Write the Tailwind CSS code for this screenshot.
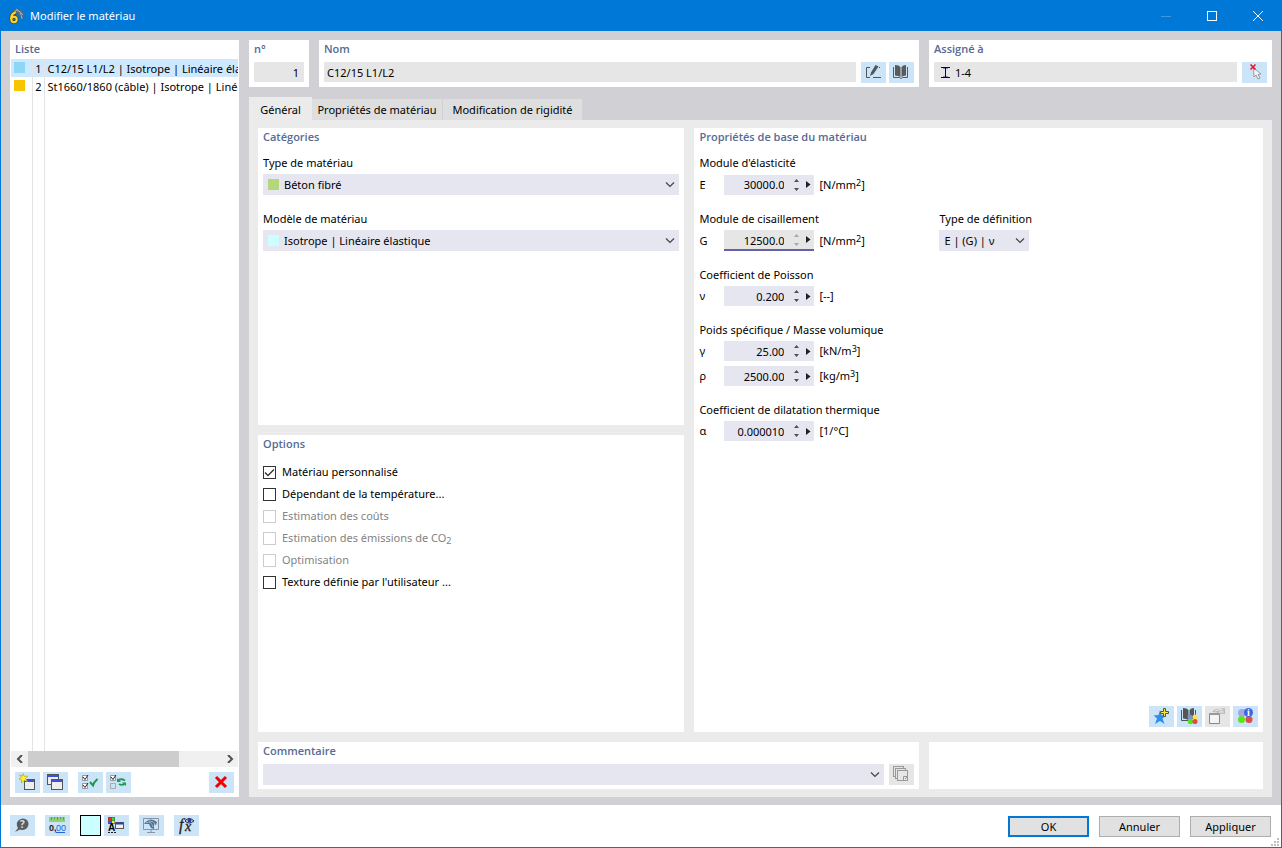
<!DOCTYPE html>
<html lang="fr">
<head>
    <meta charset="UTF-8">
    <meta name="viewport" content="width=device-width, initial-scale=1.0">
    <title>Modifier le matériau</title>
    <script src="https://cdn.jsdelivr.net/npm/@tailwindcss/browser@4"></script>
</head>
<body class="font-['Noto_Sans','Open_Sans',sans-serif] text-[11px] leading-4 text-black">
    <div class="min-h-screen flex flex-col border border-t-0 border-[#0078d7] bg-white">
        <!-- Title bar -->
        <header class="h-[31px] shrink-0 flex items-center bg-[#0078d7] text-white">
            <svg class="w-4 h-4 ml-2" viewBox="0 0 16 16" aria-hidden="true">
                <path d="M3 4Q9-3 15 4L13 13Q12 7 7 6Z" fill="#52677d"/>
                <path d="M5 3Q10 1 14 7M7 1Q12 3 13 11" stroke="#9eb2c4" fill="none"/>
                <path d="M7 4Q2 6 2 11" stroke="#5b4a10" stroke-width="4" fill="none"/>
                <circle cx="5" cy="11.500" r="2.700" stroke="#5b4a10" stroke-width="3.500" fill="none"/>
                <path d="M7 4Q2 6 2 11" stroke="#ffd42e" stroke-width="2" fill="none"/>
                <circle cx="5" cy="11.500" r="2.700" stroke="#ffd42e" stroke-width="2" fill="none"/>
            </svg>
            <h1 class="flex-1 ml-[5px]">Modifier le matériau</h1>
            <button class="w-[46px] h-full flex items-center justify-center" aria-label="Réduire" disabled>
                <svg class="w-[10px] h-[10px]" viewBox="0 0 10 10"><path d="M0 5.500H10" stroke="#3f98e0"/></svg>
            </button>
            <button class="w-[46px] h-full flex items-center justify-center" aria-label="Agrandir">
                <svg class="w-[10px] h-[10px]" viewBox="0 0 10 10"><rect x=".5" y=".5" width="9" height="9" fill="none" stroke="#fff"/></svg>
            </button>
            <button class="w-[46px] h-full flex items-center justify-center" aria-label="Fermer">
                <svg class="w-[10px] h-[10px]" viewBox="0 0 10 10"><path d="M0 0L10 10M10 0L0 10" stroke="#fff"/></svg>
            </button>
        </header>

        <main class="flex-1 flex gap-[10px] px-[9px] pt-[9px] pb-2 bg-[#d1d0d5]">
            <!-- Material list -->
            <section class="w-[229px] shrink-0 flex flex-col bg-white">
                <h2 class="h-[19px] pl-[5px] leading-[18px] font-['Open_Sans'] font-semibold text-[#566a95]">Liste</h2>
                <div class="flex-1 mx-px flex flex-col overflow-hidden">
                    <table class="w-full table-fixed border-collapse">
                        <colgroup><col class="w-[21px]"><col class="w-3"><col></colgroup>
                        <tbody>
                            <tr class="h-[18px] bg-[#cde8ff]">
                                <td class="pl-[3px] border-r border-[#e4e4e4]"><div class="w-[11px] h-[11px] mb-[2px] bg-[#8dd6f5]"></div></td>
                                <td class="pt-[2px] pr-[2px] text-right border-r border-[#e4e4e4]">1</td>
                                <td class="pt-[2px] pl-[3px] overflow-hidden whitespace-nowrap">C12/15 L1/L2 | Isotrope | Linéaire élastique</td>
                            </tr>
                            <tr class="h-[18px]">
                                <td class="pl-[3px] border-r border-[#e4e4e4]"><div class="w-[11px] h-[11px] mb-[2px] bg-[#f7c400]"></div></td>
                                <td class="pt-[2px] pr-[2px] text-right border-r border-[#e4e4e4]">2</td>
                                <td class="pt-[2px] pl-[3px] overflow-hidden whitespace-nowrap">St1660/1860 (câble) | Isotrope | Linéaire élastique</td>
                            </tr>
                        </tbody>
                    </table>
                    <div class="flex-1 flex">
                        <div class="w-[22px] border-r border-[#e4e4e4]"></div>
                        <div class="w-3 border-r border-[#e4e4e4]"></div>
                    </div>
                </div>
                <div class="h-4 mx-px flex bg-[#f0f0f0]">
                    <button class="w-[17px] flex items-center justify-center" aria-label="Défiler à gauche">
                        <svg class="w-2 h-2" viewBox="0 0 8 8"><path d="M6 0L2 4L6 8" fill="none" stroke="#505050" stroke-width="2"/></svg>
                    </button>
                    <div class="flex-1"><div class="w-[78%] h-full bg-[#cdcdcd]"></div></div>
                    <button class="w-[17px] flex items-center justify-center" aria-label="Défiler à droite">
                        <svg class="w-2 h-2" viewBox="0 0 8 8"><path d="M2 0L6 4L2 8" fill="none" stroke="#505050" stroke-width="2"/></svg>
                    </button>
                </div>
                <div class="flex gap-[3px] pt-[5px] px-[5px] pb-1">
                    <button class="w-[25px] h-[21px] bg-[#cce4f7]" aria-label="Nouveau">
                        <svg viewBox="0 0 25 21">
                            <rect x="9.500" y="7.500" width="10" height="10" fill="#eee" stroke="#555"/><path d="M10 9H19" stroke="#3d50e0" stroke-width="2"/>
                            <path d="M8 1.500L9.500 4.500L13 4L10.500 6.500L12.500 9.500L9 8.500L6.500 11L6.500 8L4 7L6.500 5.500L4.500 3L7.500 4Z" fill="#fff22c" stroke="#a89c20" stroke-width=".6"/>
                        </svg>
                    </button>
                    <button class="w-[25px] h-[21px] bg-[#cce4f7]" aria-label="Copier">
                        <svg viewBox="0 0 25 21">
                            <rect x="4.500" y="2.500" width="11" height="10" fill="#eee" stroke="#555"/><path d="M5 4H15" stroke="#3d50e0" stroke-width="2"/>
                            <rect x="8.500" y="7.500" width="11" height="10" fill="#eee" stroke="#555"/><path d="M9 9H19" stroke="#3d50e0" stroke-width="2"/>
                        </svg>
                    </button>
                    <button class="w-[25px] h-[21px] ml-[7px] bg-[#cce4f7]" aria-label="Tout sélectionner">
                        <svg viewBox="0 0 25 21" fill="none">
                            <path d="M4.500 3.500H9.500V8.500H4.500ZM4.500 11.500H9.500V16.500H4.500Z" fill="#fff" stroke="#999"/>
                            <path d="M5 5L7 7.500L10 3M5 13L7 15.500L10 11" stroke="#222"/>
                            <path d="M12 10L15 13.500Q16 10 19.500 7" stroke="#149c4c" stroke-width="2"/>
                        </svg>
                    </button>
                    <button class="w-[25px] h-[21px] bg-[#cce4f7]" aria-label="Inverser la sélection">
                        <svg viewBox="0 0 25 21" fill="none">
                            <path d="M4.500 3.500H9.500V8.500H4.500Z" fill="#fff" stroke="#999"/>
                            <path d="M5 5L7 7.500L10 3" stroke="#222"/>
                            <path d="M4.500 11.500H9.500V16.500H4.500Z" stroke="#aaa"/>
                            <path d="M12 8.500Q15 6 19 8.500M19 11.500Q16 14 13 12" stroke="#18a050" stroke-width="1.800"/>
                            <path d="M11 6V10H15ZM20 14V10.500H16Z" fill="#18a050"/>
                        </svg>
                    </button>
                    <button class="w-[25px] h-[21px] ml-auto bg-[#cce4f7]" aria-label="Supprimer">
                        <svg viewBox="0 0 25 21"><path d="M7 5L17 15M17 5L7 15" stroke="#f40000" stroke-width="3"/></svg>
                    </button>
                </div>
            </section>

            <div class="flex-1 min-w-0 flex flex-col">
                <!-- Number, name and assignment -->
                <div class="flex gap-[10px] mb-[10px]">
                    <section class="w-[60px] h-[47px] px-[5px] bg-white">
                        <label for="no" class="block h-[22px] leading-[18px] font-['Open_Sans'] font-semibold text-[#566a95]">n°</label>
                        <input id="no" class="block w-full h-5 pt-px pr-[5px] text-right bg-[#e6e6e6]" value="1" readonly>
                    </section>
                    <section class="flex-1 h-[47px] px-[5px] bg-white">
                        <label for="nom" class="block h-[22px] leading-[18px] font-['Open_Sans'] font-semibold text-[#566a95]">Nom</label>
                        <div class="flex">
                            <input id="nom" class="flex-1 min-w-0 h-5 pt-px pl-[3px] mr-[5px] bg-[#e6e6e6]" value="C12/15 L1/L2" readonly>
                            <button class="w-[25px] h-[21px] mr-[3px] bg-[#cce4f7]" aria-label="Modifier le nom">
                                <svg viewBox="0 0 25 21" fill="none">
                                    <path d="M9 5.500H5.500V15.500H9M12 15.500H20M15 5.500H16M18 5.500H19" stroke="#555"/>
                                    <path d="M9 14L10 10.500L14.500 3L17.500 4.500L12.500 12Z" fill="#555"/>
                                </svg>
                            </button>
                            <button class="w-[25px] h-[21px] bg-[#cce4f7]" aria-label="Bibliothèque">
                                <svg viewBox="0 0 25 21">
                                    <path d="M6 3Q10 3 11.500 5V15Q9 13.500 6 13.500ZM17 3Q14 3 12.500 5V15Q14 13.500 17 13.500Z" fill="#5a5a5a"/>
                                    <path d="M4.500 5V15.500H10.500L12 16.500L13.500 15.500H18.500V5" fill="none" stroke="#5a5a5a"/>
                                </svg>
                            </button>
                        </div>
                    </section>
                    <section class="w-[343px] h-[47px] px-[5px] bg-white">
                        <label for="assigne" class="block h-[22px] leading-[18px] font-['Open_Sans'] font-semibold text-[#566a95]">Assigné à</label>
                        <div class="flex">
                            <div class="flex-1 flex items-center h-5 pl-[7px] mr-[5px] bg-[#e6e6e6]">
                                <svg class="w-[9px] h-[11px]" viewBox="0 0 9 11"><path d="M0 .5H9M0 10.500H9M4.500 0V11" stroke="#00007f"/><path d="M2 1.500H7M2 9.500H7" stroke="#00007f" stroke-opacity=".4"/></svg>
                                <input id="assigne" class="flex-1 min-w-0 h-5 pt-px pl-[5px]" value="1-4" readonly>
                            </div>
                            <button class="w-[25px] h-[21px] bg-[#cce4f7]" aria-label="Sélectionner">
                                <svg viewBox="0 0 25 21">
                                    <path d="M11.500 6L12 15L14 13L16 17L18 16L16 12.500L19 12Z" fill="#f4f4f4" stroke="#888" stroke-width=".8"/>
                                    <path d="M8.500 2.500L13.500 7.500M13.500 2.500L8.500 7.500" stroke="#e81224" stroke-width="1.500"/>
                                </svg>
                            </button>
                        </div>
                    </section>
                </div>

                <!-- Tabs -->
                <nav class="flex items-end" role="tablist">
                    <button role="tab" aria-selected="true" class="w-[63px] h-[23px] pt-[3px] bg-[#ebebeb]">Général</button>
                    <button role="tab" class="w-[130px] h-[21px] pt-px mr-px bg-[#dedede]">Propriétés de matériau</button>
                    <button role="tab" class="w-[139px] h-[21px] pt-px bg-[#dedede]">Modification de rigidité</button>
                </nav>

                <div class="flex-1 flex flex-col gap-[10px] px-[9px] py-2 bg-[#ebebeb]">
                    <div class="flex-1 grid grid-cols-[3fr_4fr] gap-[10px]">
                        <div class="flex flex-col gap-[10px]">
                            <section class="flex-1 px-[5px] bg-white">
                                <h2 class="h-[27px] leading-[18px] font-['Open_Sans'] font-semibold text-[#566a95]">Catégories</h2>
                                <div class="flex flex-col gap-4">
                                    <div>
                                        <label for="type" class="block h-[19px]">Type de matériau</label>
                                        <div class="relative h-[21px] bg-[#e6e6f1]">
                                            <select id="type" class="appearance-none w-full h-full pl-[21px]"><option>Béton fibré</option></select>
                                            <span class="absolute left-[5px] top-[5px] w-[11px] h-[11px] bg-[#b4d77b]"></span>
                                            <svg class="absolute right-1 top-2 w-[10px] h-[6px] pointer-events-none" viewBox="0 0 10 6"><path d="M1 .5L5 4.500L9 .5" fill="none" stroke="#444" stroke-width="1.200"/></svg>
                                        </div>
                                    </div>
                                    <div>
                                        <label for="modele" class="block h-[19px]">Modèle de matériau</label>
                                        <div class="relative h-[21px] bg-[#e6e6f1]">
                                            <select id="modele" class="appearance-none w-full h-full pl-[21px]"><option>Isotrope | Linéaire élastique</option></select>
                                            <span class="absolute left-[5px] top-[5px] w-[11px] h-[11px] bg-[#ccffff]"></span>
                                            <svg class="absolute right-1 top-2 w-[10px] h-[6px] pointer-events-none" viewBox="0 0 10 6"><path d="M1 .5L5 4.500L9 .5" fill="none" stroke="#444" stroke-width="1.200"/></svg>
                                        </div>
                                    </div>
                                </div>
                            </section>
                            <section class="flex-1 px-[5px] bg-white">
                                <h2 class="h-[26px] leading-[18px] font-['Open_Sans'] font-semibold text-[#566a95]">Options</h2>
                                <label class="flex items-center h-[22px] gap-[6px]">
                                    <span class="relative w-[13px] h-[13px]">
                                        <input type="checkbox" checked class="appearance-none block w-[13px] h-[13px] border border-[#333]">
                                        <svg class="absolute inset-0 w-[13px] h-[13px]" viewBox="0 0 13 13"><path d="M2 6.500L5 9.500L11 3.500" fill="none" stroke="#333" stroke-width="1.300"/></svg>
                                    </span>
                                    Matériau personnalisé
                                </label>
                                <label class="flex items-center h-[22px] gap-[6px]"><input type="checkbox" class="appearance-none w-[13px] h-[13px] border border-[#333]">Dépendant de la température...</label>
                                <label class="flex items-center h-[22px] gap-[6px] text-[#838383]"><input type="checkbox" disabled class="appearance-none w-[13px] h-[13px] border border-[#ccc]">Estimation des coûts</label>
                                <label class="flex items-center h-[22px] gap-[6px] text-[#838383]"><input type="checkbox" disabled class="appearance-none w-[13px] h-[13px] border border-[#ccc]"><span>Estimation des émissions de CO<sub class="text-[9px] bottom-[-2px]">2</sub></span></label>
                                <label class="flex items-center h-[22px] gap-[6px] text-[#838383]"><input type="checkbox" disabled class="appearance-none w-[13px] h-[13px] border border-[#ccc]">Optimisation</label>
                                <label class="flex items-center h-[22px] gap-[6px]"><input type="checkbox" class="appearance-none w-[13px] h-[13px] border border-[#333]">Texture définie par l'utilisateur ...</label>
                            </section>
                        </div>

                        <!-- Basic properties -->
                        <section class="flex flex-col px-[5px] bg-white">
                            <h2 class="h-[27px] leading-[18px] font-['Open_Sans'] font-semibold text-[#566a95]">Propriétés de base du matériau</h2>
                            <div class="flex-1 flex flex-col gap-4">
                                <div>
                                    <p class="h-[19px]">Module d'élasticité</p>
                                    <div class="flex items-center h-[21px]">
                                        <label for="e" class="w-[25px]">E</label>
                                        <div class="flex w-[90px] h-5 mr-[5px] bg-[#e6e6f1]">
                                            <input id="e" class="w-[60px] pt-px text-right" value="30000.0">
                                            <button class="w-[22px] flex justify-end items-center" aria-label="Ajuster E"><svg class="w-4 h-3" viewBox="0 0 16 12"><path d="M4 3L6.500 0L9 3ZM4 9L6.500 12L9 9Z" fill="#505050"/></svg></button>
                                            <button class="w-2 flex items-center" aria-label="Valeurs E"><svg class="w-[5px] h-[7px]" viewBox="0 0 5 7"><path d="M0 0L4.500 3.500L0 7Z" fill="#222"/></svg></button>
                                        </div>
                                        <span>[N/mm<sup class="text-[9px] top-[-3px]">2</sup>]</span>
                                    </div>
                                </div>
                                <div class="flex">
                                    <div class="w-60">
                                        <p class="h-[19px]">Module de cisaillement</p>
                                        <div class="flex items-center h-[21px]">
                                            <label for="g" class="w-[25px]">G</label>
                                            <div class="flex w-[90px] h-[21px] mr-[5px] bg-[#e6e6e6] border-b-2 border-[#6461a8]">
                                                <input id="g" class="w-[60px] pt-[2px] text-right" value="12500.0" readonly>
                                                <button class="w-[22px] flex justify-end items-center" aria-label="Ajuster G" disabled><svg class="w-4 h-3" viewBox="0 0 16 12"><path d="M4 3L6.500 0L9 3ZM4 9L6.500 12L9 9Z" fill="#a8a8a8"/></svg></button>
                                                <button class="w-2 flex items-center" aria-label="Valeurs G"><svg class="w-[5px] h-[7px]" viewBox="0 0 5 7"><path d="M0 0L4.500 3.500L0 7Z" fill="#222"/></svg></button>
                                            </div>
                                            <span>[N/mm<sup class="text-[9px] top-[-3px]">2</sup>]</span>
                                        </div>
                                    </div>
                                    <div>
                                        <label for="def" class="block h-[19px]">Type de définition</label>
                                        <div class="relative w-[90px] h-[21px] bg-[#e6e6f1]">
                                            <select id="def" class="appearance-none w-full h-full pl-[5px]"><option>E | (G) | ν</option></select>
                                            <svg class="absolute right-1 top-2 w-[10px] h-[6px] pointer-events-none" viewBox="0 0 10 6"><path d="M1 .5L5 4.500L9 .5" fill="none" stroke="#444" stroke-width="1.200"/></svg>
                                        </div>
                                    </div>
                                </div>
                                <div>
                                    <p class="h-[19px]">Coefficient de Poisson</p>
                                    <div class="flex items-center h-5">
                                        <label for="nu" class="w-[25px]">ν</label>
                                        <div class="flex w-[90px] h-5 mr-[5px] bg-[#e6e6f1]">
                                            <input id="nu" class="w-[60px] pt-px text-right" value="0.200">
                                            <button class="w-[22px] flex justify-end items-center" aria-label="Ajuster ν"><svg class="w-4 h-3" viewBox="0 0 16 12"><path d="M4 3L6.500 0L9 3ZM4 9L6.500 12L9 9Z" fill="#505050"/></svg></button>
                                            <button class="w-2 flex items-center" aria-label="Valeurs ν"><svg class="w-[5px] h-[7px]" viewBox="0 0 5 7"><path d="M0 0L4.500 3.500L0 7Z" fill="#222"/></svg></button>
                                        </div>
                                        <span>[--]</span>
                                    </div>
                                </div>
                                <div>
                                    <p class="h-[19px]">Poids spécifique / Masse volumique</p>
                                    <div class="flex items-center h-5 mb-[5px]">
                                        <label for="gamma" class="w-[25px]">γ</label>
                                        <div class="flex w-[90px] h-5 mr-[5px] bg-[#e6e6f1]">
                                            <input id="gamma" class="w-[60px] pt-px text-right" value="25.00">
                                            <button class="w-[22px] flex justify-end items-center" aria-label="Ajuster γ"><svg class="w-4 h-3" viewBox="0 0 16 12"><path d="M4 3L6.500 0L9 3ZM4 9L6.500 12L9 9Z" fill="#505050"/></svg></button>
                                            <button class="w-2 flex items-center" aria-label="Valeurs γ"><svg class="w-[5px] h-[7px]" viewBox="0 0 5 7"><path d="M0 0L4.500 3.500L0 7Z" fill="#222"/></svg></button>
                                        </div>
                                        <span>[kN/m<sup class="text-[9px] top-[-3px]">3</sup>]</span>
                                    </div>
                                    <div class="flex items-center h-5">
                                        <label for="rho" class="w-[25px]">ρ</label>
                                        <div class="flex w-[90px] h-5 mr-[5px] bg-[#e6e6f1]">
                                            <input id="rho" class="w-[60px] pt-px text-right" value="2500.00">
                                            <button class="w-[22px] flex justify-end items-center" aria-label="Ajuster ρ"><svg class="w-4 h-3" viewBox="0 0 16 12"><path d="M4 3L6.500 0L9 3ZM4 9L6.500 12L9 9Z" fill="#505050"/></svg></button>
                                            <button class="w-2 flex items-center" aria-label="Valeurs ρ"><svg class="w-[5px] h-[7px]" viewBox="0 0 5 7"><path d="M0 0L4.500 3.500L0 7Z" fill="#222"/></svg></button>
                                        </div>
                                        <span>[kg/m<sup class="text-[9px] top-[-3px]">3</sup>]</span>
                                    </div>
                                </div>
                                <div>
                                    <p class="h-[19px]">Coefficient de dilatation thermique</p>
                                    <div class="flex items-center h-5">
                                        <label for="alpha" class="w-[25px]">α</label>
                                        <div class="flex w-[90px] h-5 mr-[5px] bg-[#e6e6f1]">
                                            <input id="alpha" class="w-[60px] pt-px text-right" value="0.000010">
                                            <button class="w-[22px] flex justify-end items-center" aria-label="Ajuster α"><svg class="w-4 h-3" viewBox="0 0 16 12"><path d="M4 3L6.500 0L9 3ZM4 9L6.500 12L9 9Z" fill="#505050"/></svg></button>
                                            <button class="w-2 flex items-center" aria-label="Valeurs α"><svg class="w-[5px] h-[7px]" viewBox="0 0 5 7"><path d="M0 0L4.500 3.500L0 7Z" fill="#222"/></svg></button>
                                        </div>
                                        <span>[1/°C]</span>
                                    </div>
                                </div>
                            </div>
                            <div class="flex justify-end gap-[3px] pb-[5px]">
                                <button class="w-[25px] h-[21px] bg-[#cce4f7]" aria-label="Favori">
                                    <svg viewBox="0 0 25 21">
                                        <path d="M11 4L12.500 9L17 9.500L13.500 12.500L15.500 18L11 15L6 18L8 12.500L4.500 9.500L9.500 9Z" fill="#2f8fee"/>
                                        <path d="M14.500 2.500H16.500V5.500H19.500V7.500H16.500V10.500H14.500V7.500H11.500V5.500H14.500Z" fill="#ffe640" stroke="#62571c"/>
                                    </svg>
                                </button>
                                <button class="w-[25px] h-[21px] bg-[#cce4f7]" aria-label="Bibliothèque de matériaux">
                                    <svg viewBox="0 0 25 21">
                                        <path d="M6 2Q10 2 11.500 4V14Q9 12.500 6 12.500ZM17 2Q14 2 12.500 4V14Q14 12.500 17 12.500Z" fill="#555"/>
                                        <path d="M4.500 4V14.500H11M18.500 4V10" fill="none" stroke="#555"/>
                                        <circle cx="13" cy="11" r="2.500" fill="#7f8fe0"/><circle cx="18" cy="11" r="2.500" fill="#ffe04a"/><circle cx="13.500" cy="15.500" r="2.700" fill="#58e01c"/><circle cx="18" cy="15.500" r="2.500" fill="#ef4040"/>
                                    </svg>
                                </button>
                                <button class="w-[25px] h-[21px] bg-[#e6e6e6]" aria-label="Exporter" disabled>
                                    <svg viewBox="0 0 25 21">
                                        <path d="M4.500 7.500H14.500V17.500H4.500Z" fill="#f4f4f4" stroke="#888"/><path d="M4 8H15" stroke="#999" stroke-width="2"/>
                                        <path d="M7 6Q10 2 14 3L20 2V8H16Q12 6 7 6Z" fill="#bcbcbc"/><path d="M10 5Q13 3 18 4M14 6H19" fill="none" stroke="#f0f0f0"/>
                                    </svg>
                                </button>
                                <button class="w-[25px] h-[21px] bg-[#cce4f7]" aria-label="Informations">
                                    <svg viewBox="0 0 25 21">
                                        <circle cx="9" cy="7" r="4" fill="#a0a8e8"/><circle cx="8.500" cy="13.500" r="3.500" fill="#62df1d"/><circle cx="16" cy="13.500" r="3.500" fill="#e84848"/>
                                        <circle cx="15.500" cy="6.500" r="4.500" fill="#3e66d8"/><text x="14" y="10" font-family="Liberation Serif" font-weight="bold" font-size="10" fill="#fff">i</text>
                                    </svg>
                                </button>
                            </div>
                        </section>
                    </div>

                    <!-- Comment -->
                    <div class="flex gap-[10px]">
                        <section class="flex-1 h-[47px] px-[5px] bg-white">
                            <label for="commentaire" class="block h-[22px] leading-[18px] font-['Open_Sans'] font-semibold text-[#566a95]">Commentaire</label>
                            <div class="flex gap-[5px]">
                                <div class="relative flex-1 h-[21px] bg-[#e6e6f1]">
                                    <select id="commentaire" class="appearance-none w-full h-full pl-[5px]"><option></option></select>
                                    <svg class="absolute right-1 top-2 w-[10px] h-[6px] pointer-events-none" viewBox="0 0 10 6"><path d="M1 .5L5 4.500L9 .5" fill="none" stroke="#444" stroke-width="1.200"/></svg>
                                </div>
                                <button class="w-[25px] h-[21px] bg-[#e6e6e6]" aria-label="Copier le commentaire" disabled>
                                    <svg viewBox="0 0 25 21" fill="#e6e6e6" stroke="#999">
                                        <rect x="4.500" y="2.500" width="10" height="10"/><rect x="6.500" y="4.500" width="10" height="10"/><rect x="8.500" y="6.500" width="10" height="10"/><path d="M14.500 16.500V12.500H18.500M16 15L18 13" fill="none"/>
                                    </svg>
                                </button>
                            </div>
                        </section>
                        <section class="w-[334px] bg-white"></section>
                    </div>
                </div>
            </div>
        </main>

        <footer class="relative h-[42px] shrink-0 flex items-start pl-[9px] pr-[10px] pt-[10px]">
            <button class="w-[25px] h-[21px] mr-[10px] bg-[#cce4f7]" aria-label="Aide">
                <svg viewBox="0 0 25 21"><path d="M5 17L8 13Q5 8 9 5Q13 2 17 5Q20 9 17 13Q14 16 10 14.500Z" fill="#5c5c5c"/><text x="10" y="13" font-family="Open Sans" font-weight="bold" font-size="10" fill="#cce4f7">?</text></svg>
            </button>
            <button class="w-[25px] h-[21px] mr-[10px] bg-[#cce4f7]" aria-label="Unités">
                <svg viewBox="0 0 25 21">
                    <rect x="4" y="2" width="16" height="5" fill="#8fd07b"/><path d="M6.500 2V5M9.500 2V4M12.500 2V5M15.500 2V4M18.500 2V5" stroke="#5da04a"/>
                    <text x="4" y="16" font-family="Liberation Sans" font-weight="bold" font-size="9" fill="#222">0,</text><text x="11" y="16" font-family="Liberation Sans" font-size="9" fill="#2464d8">00</text><path d="M11 17.500H20" stroke="#2464d8"/>
                </svg>
            </button>
            <button class="w-[21px] h-[21px] mr-[3px] bg-[#ccffff] border border-black" aria-label="Couleur"></button>
            <button class="w-[25px] h-[21px] mr-[10px] bg-[#cce4f7]" aria-label="Affichage">
                <svg viewBox="0 0 25 21">
                    <rect x="4" y="2" width="7" height="7" fill="#555"/><path d="M4.500 2.500H7.500V5.500H4.500Z" fill="#f22"/><path d="M8 2.500H10.500V5.500H8Z" fill="#3d3"/><path d="M4.500 6H7.500V8.500H4.500Z" fill="#35f"/><path d="M8 6H10.500V8.500H8Z" fill="#fe2"/>
                    <text x="4" y="16" font-family="Liberation Sans" font-weight="bold" font-size="10">A</text><path d="M4 17.500H12" stroke="#222" stroke-dasharray="2 1"/>
                    <rect x="11.500" y="7.500" width="8" height="6" fill="#eee" stroke="#555"/><path d="M12 8.500H19" stroke="#3040a0" stroke-width="2"/>
                </svg>
            </button>
            <button class="w-[25px] h-[21px] mr-[10px] bg-[#cce4f7]" aria-label="Vue">
                <svg viewBox="0 0 25 21">
                    <path d="M4.500 3.500H19.500V14.500H4.500ZM12 15V17.500M8 17.500H16" fill="none" stroke="#8b949c"/>
                    <path d="M5 9Q11 1 18 7L17 10L15 9L15 14L12 13L10 9Z" fill="#52728f"/><path d="M7 8Q12 5 14 12M10 6Q15 6 16 9" fill="none" stroke="#96b8d6"/>
                </svg>
            </button>
            <button class="w-[25px] h-[21px] bg-[#cce4f7]" aria-label="Formules">
                <svg viewBox="0 0 25 21">
                    <text x="5" y="15" font-family="Liberation Serif" font-style="italic" font-size="16" fill="#222" stroke="#222" stroke-width=".3">f</text><text x="11" y="16" font-family="Liberation Serif" font-style="italic" font-size="14" fill="#222" stroke="#222" stroke-width=".3">x</text>
                    <path d="M11 6Q15 1 20 6Q15 10 11 6Z" fill="#dce8ff" stroke="#223"/><circle cx="15.500" cy="5.500" r="2" fill="#2438b8"/>
                </svg>
            </button>
            <div class="flex gap-[10px] ml-auto pt-px">
                <button class="w-[81px] h-[21px] bg-[#e1e1e1] border-2 border-[#0078d7]">OK</button>
                <button class="w-[81px] h-[21px] bg-[#e1e1e1] border border-[#adadad]">Annuler</button>
                <button class="w-[81px] h-[21px] bg-[#e1e1e1] border border-[#adadad]">Appliquer</button>
            </div>
            <svg class="absolute right-[2px] bottom-px w-2 h-2" viewBox="0 0 8 8"><path d="M6 0H8V2H6ZM3 3H5V5H3ZM6 3H8V5H6ZM0 6H2V8H0ZM3 6H5V8H3ZM6 6H8V8H6Z" fill="#bfbfbf"/></svg>
        </footer>
    </div>
</body>
</html>
